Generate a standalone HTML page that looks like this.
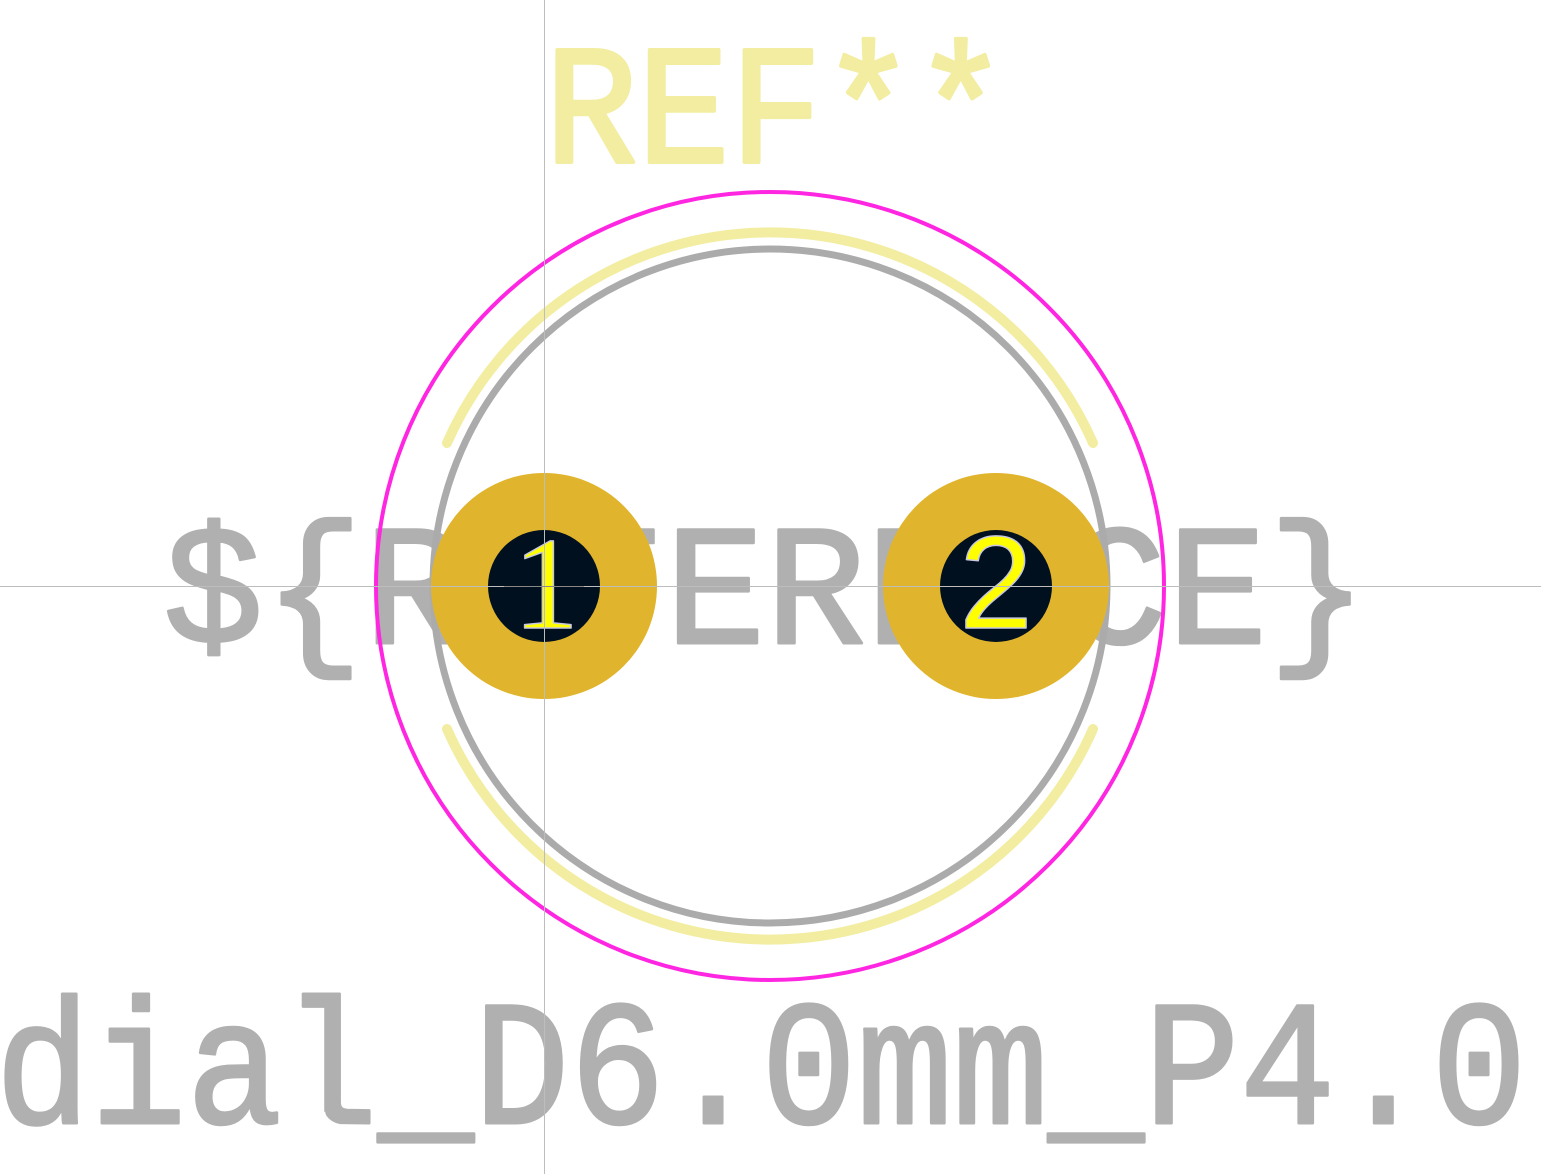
<!DOCTYPE html>
<html><head><meta charset="utf-8"><style>
html,body{margin:0;padding:0;background:#fff;width:1541px;height:1174px;overflow:hidden}
svg{display:block}
text{font-family:"Liberation Mono","DejaVu Sans Mono",monospace;stroke-linejoin:round;stroke-linecap:round}
</style></head><body>
<svg width="1541" height="1174" viewBox="0 0 1541 1174" xmlns="http://www.w3.org/2000/svg">
<rect width="1541" height="1174" fill="#fff"/>
<text x="545" y="162" font-size="170" textLength="462" lengthAdjust="spacingAndGlyphs" fill="#f2eda1" stroke="#f2eda1" stroke-width="4">REF**</text>
<text x="163" y="643" font-size="172" textLength="1205" lengthAdjust="spacingAndGlyphs" fill="#b0b0b0" stroke="#b0b0b0" stroke-width="3">${REFERENCE}</text>
<text x="-5" y="1123" font-size="178" textLength="1532" lengthAdjust="spacingAndGlyphs" fill="#b0b0b0" stroke="#b0b0b0" stroke-width="3">dial_D6.0mm_P4.0</text>
<path d="M447,443 A353,353 0 0 1 1093,443" fill="none" stroke="#f2eda1" stroke-width="10" stroke-linecap="round"/>
<path d="M447,729 A353,353 0 0 0 1093,729" fill="none" stroke="#f2eda1" stroke-width="10" stroke-linecap="round"/>
<circle cx="770" cy="586" r="337" fill="none" stroke="#ababab" stroke-width="7"/>
<circle cx="770" cy="586" r="394" fill="none" stroke="#ff26e2" stroke-width="4"/>
<circle cx="544" cy="586" r="113" fill="#e1b42d"/>
<circle cx="996" cy="586" r="113" fill="#e1b42d"/>
<circle cx="544" cy="586" r="56" fill="#00101f"/>
<circle cx="996" cy="586" r="56" fill="#00101f"/>
<text x="546" y="628" font-size="132" text-anchor="middle" style="font-family:'Liberation Serif',serif" fill="#ffff00" stroke="#c8c8e0" stroke-width="1.5">1</text>
<text x="996" y="628" font-size="132" text-anchor="middle" style="font-family:'Liberation Sans',sans-serif" fill="#ffff00" stroke="#c8c8e0" stroke-width="1.5">2</text>
<line x1="544.5" y1="0" x2="544.5" y2="1174" stroke="#bdbdbd" stroke-width="1"/>
<line x1="0" y1="586.5" x2="1541" y2="586.5" stroke="#bdbdbd" stroke-width="1"/>
<line x1="504" y1="586.5" x2="584" y2="586.5" stroke="#888" stroke-width="1"/>
</svg>
</body></html>
